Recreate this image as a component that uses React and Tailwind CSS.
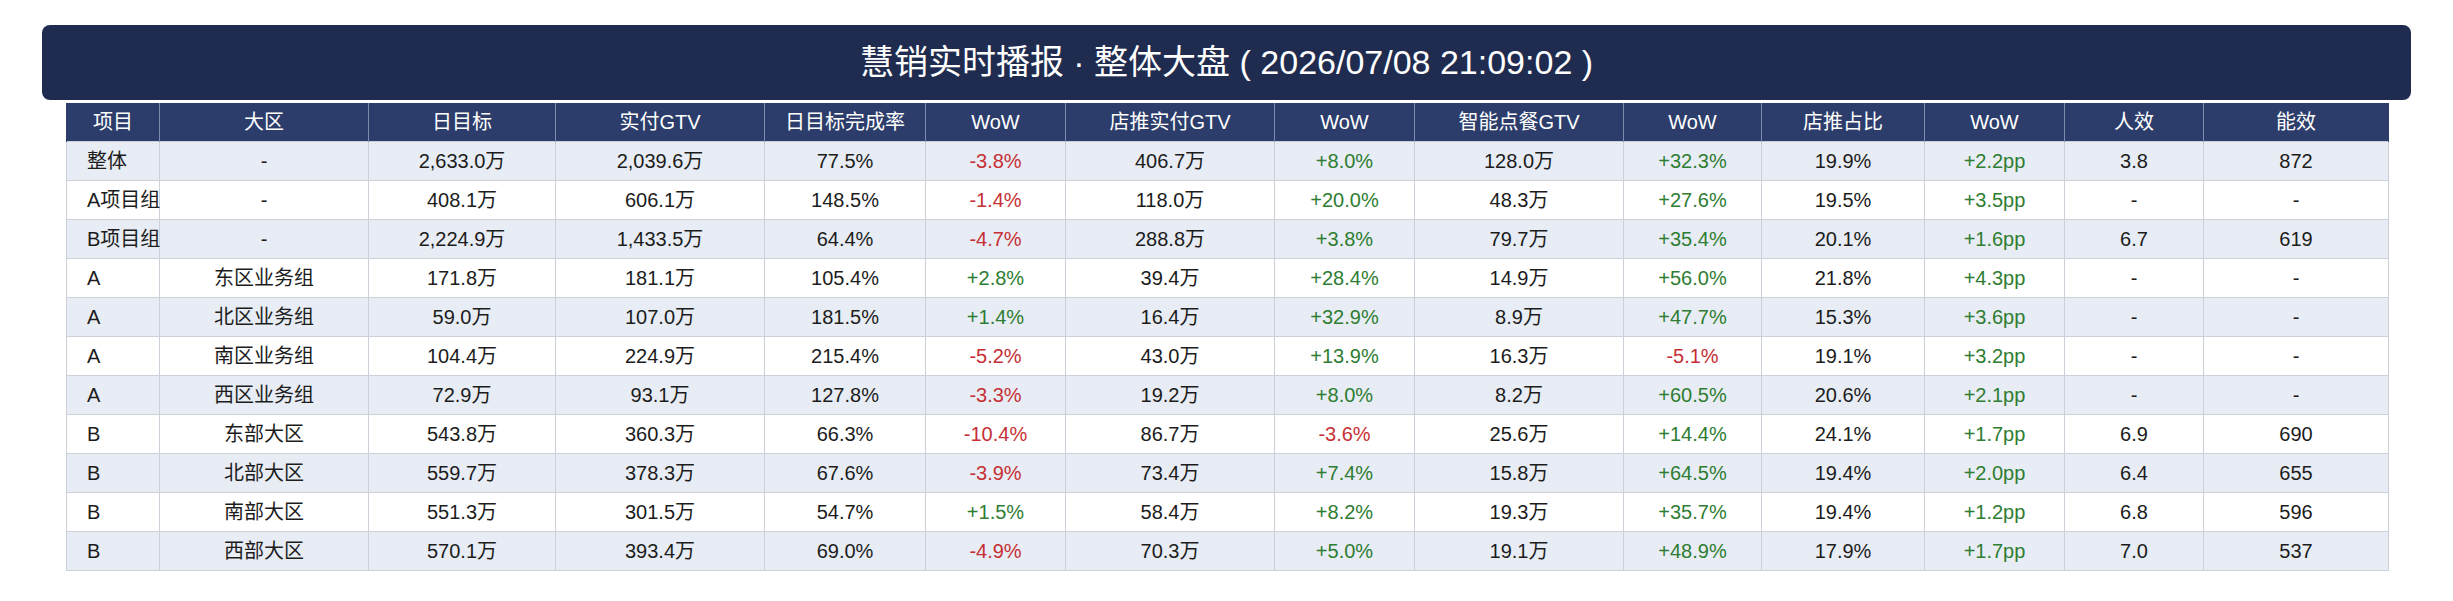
import React from "react";

const columns = [
    { label: "项目", w: "w-[93px]" },
    { label: "大区", w: "w-[209px]" },
    { label: "日目标", w: "w-[187px]" },
    { label: "实付GTV", w: "w-[209px]" },
    { label: "日目标完成率", w: "w-[161px]" },
    { label: "WoW", w: "w-[140px]" },
    { label: "店推实付GTV", w: "w-[209px]" },
    { label: "WoW", w: "w-[140px]" },
    { label: "智能点餐GTV", w: "w-[209px]" },
    { label: "WoW", w: "w-[138px]" },
    { label: "店推占比", w: "w-[163px]" },
    { label: "WoW", w: "w-[140px]" },
    { label: "人效", w: "w-[139px]" },
    { label: "能效", w: "w-[185px]" },
];

const rows = [
    ["整体", "-", "2,633.0万", "2,039.6万", "77.5%", "-3.8%", "406.7万", "+8.0%", "128.0万", "+32.3%", "19.9%", "+2.2pp", "3.8", "872"],
    ["A项目组", "-", "408.1万", "606.1万", "148.5%", "-1.4%", "118.0万", "+20.0%", "48.3万", "+27.6%", "19.5%", "+3.5pp", "-", "-"],
    ["B项目组", "-", "2,224.9万", "1,433.5万", "64.4%", "-4.7%", "288.8万", "+3.8%", "79.7万", "+35.4%", "20.1%", "+1.6pp", "6.7", "619"],
    ["A", "东区业务组", "171.8万", "181.1万", "105.4%", "+2.8%", "39.4万", "+28.4%", "14.9万", "+56.0%", "21.8%", "+4.3pp", "-", "-"],
    ["A", "北区业务组", "59.0万", "107.0万", "181.5%", "+1.4%", "16.4万", "+32.9%", "8.9万", "+47.7%", "15.3%", "+3.6pp", "-", "-"],
    ["A", "南区业务组", "104.4万", "224.9万", "215.4%", "-5.2%", "43.0万", "+13.9%", "16.3万", "-5.1%", "19.1%", "+3.2pp", "-", "-"],
    ["A", "西区业务组", "72.9万", "93.1万", "127.8%", "-3.3%", "19.2万", "+8.0%", "8.2万", "+60.5%", "20.6%", "+2.1pp", "-", "-"],
    ["B", "东部大区", "543.8万", "360.3万", "66.3%", "-10.4%", "86.7万", "-3.6%", "25.6万", "+14.4%", "24.1%", "+1.7pp", "6.9", "690"],
    ["B", "北部大区", "559.7万", "378.3万", "67.6%", "-3.9%", "73.4万", "+7.4%", "15.8万", "+64.5%", "19.4%", "+2.0pp", "6.4", "655"],
    ["B", "南部大区", "551.3万", "301.5万", "54.7%", "+1.5%", "58.4万", "+8.2%", "19.3万", "+35.7%", "19.4%", "+1.2pp", "6.8", "596"],
    ["B", "西部大区", "570.1万", "393.4万", "69.0%", "-4.9%", "70.3万", "+5.0%", "19.1万", "+48.9%", "17.9%", "+1.7pp", "7.0", "537"],
];

// WoW columns get red / green text
const wowCols = [5, 7, 9, 11];

function cellColor(i, v) {
    if (!wowCols.includes(i)) return "text-[#1c1c1c]";
    return v.startsWith("-") ? "text-[#c62f35]" : "text-[#2e7d32]";
}

export default function App() {
    return (
        <div className="w-[2453px] h-[601px] bg-white px-[42px] pt-[25px] font-['Liberation_Sans','Noto_Sans_CJK_SC',sans-serif]">
            {/* Title bar */}
            <div className="h-[75px] bg-[#1f2c4f] rounded-lg flex items-center justify-center">
                <h1 className="text-[34px] text-white font-normal">
                    慧销实时播报 · 整体大盘 ( 2026/07/08 21:09:02 )
                </h1>
            </div>

            {/* Data table */}
            <div className="mx-6 mt-[3px]">
                <table className="table-fixed border-collapse w-[2322px] text-[20px]">
                    <colgroup>
                        {columns.map((c, i) => (
                            <col key={i} className={c.w} />
                        ))}
                    </colgroup>
                    <thead>
                        <tr className="h-[38px] bg-[#2c3d6b] text-white">
                            {columns.map((c, i) => (
                                <th
                                    key={i}
                                    className="font-normal text-center border-x border-[#7d8cad] first:border-l-[#2c3d6b] last:border-r-[#2c3d6b] p-0"
                                >
                                    {c.label}
                                </th>
                            ))}
                        </tr>
                    </thead>
                    <tbody>
                        {rows.map((r, ri) => (
                            <tr
                                key={ri}
                                className={`h-[39px] ${ri % 2 === 0 ? "bg-[#e8ecf4]" : "bg-white"}`}
                            >
                                {r.map((v, i) => (
                                    <td
                                        key={i}
                                        className={`border border-[#ccd0d8] p-0 whitespace-nowrap ${
                                            i === 0 ? "text-left pl-5 overflow-visible" : "text-center"
                                        } ${cellColor(i, v)}`}
                                    >
                                        {v}
                                    </td>
                                ))}
                            </tr>
                        ))}
                    </tbody>
                </table>
            </div>
        </div>
    );
}
